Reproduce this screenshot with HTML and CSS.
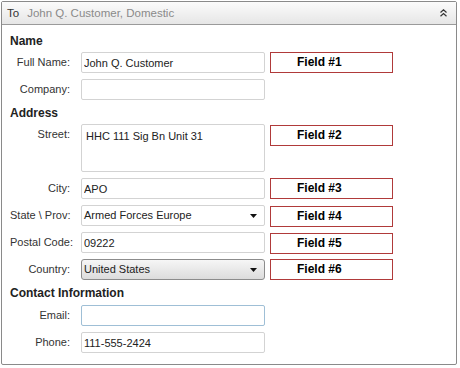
FILE: index.html
```html
<!DOCTYPE html>
<html lang="en">
<head>
  <meta charset="UTF-8" />
  <title>Ship To</title>
  <link rel="stylesheet" href="styles.css">
</head>
<body>

  <div class="panel">
    <div class="panel-head">
      <span class="head-to">To</span>
      <span class="head-summary">John Q. Customer, Domestic</span>
      <svg class="collapse" width="7" height="8" viewBox="0 0 7 8">
        <path d="M0.5 3.5 L3.5 0.8 L6.5 3.5 M0.5 7.2 L3.5 4.5 L6.5 7.2" fill="none" stroke="#333" stroke-width="1.2"/>
      </svg>
    </div>

    <div class="panel-body">
      <h3 class="section">Name</h3>
      <div class="rows">
        <div class="row">
          <label>Full Name:</label>
          <input class="field" type="text" value="John Q. Customer" />
          <div class="tag">Field #1</div>
        </div>
        <div class="row">
          <label>Company:</label>
          <input class="field" type="text" value="" />
        </div>
      </div>

      <h3 class="section">Address</h3>
      <div class="rows">
        <div class="row">
          <label>Street:</label>
          <div class="field area">HHC 111 Sig Bn Unit 31</div>
          <div class="tag tag-low">Field #2</div>
        </div>
        <div class="row">
          <label>City:</label>
          <input class="field" type="text" value="APO" />
          <div class="tag">Field #3</div>
        </div>
        <div class="row">
          <label>State \ Prov:</label>
          <div class="field select">
            <span>Armed Forces Europe</span>
            <svg width="7" height="4" viewBox="0 0 7 4"><path d="M0 0 H7 L3.5 4 Z" fill="#111"/></svg>
          </div>
          <div class="tag tag-low">Field #4</div>
        </div>
        <div class="row">
          <label>Postal Code:</label>
          <input class="field" type="text" value="09222" />
          <div class="tag tag-low">Field #5</div>
        </div>
        <div class="row">
          <label>Country:</label>
          <div class="field select select-btn">
            <span>United States</span>
            <svg width="7" height="4" viewBox="0 0 7 4"><path d="M0 0 H7 L3.5 4 Z" fill="#111"/></svg>
          </div>
          <div class="tag">Field #6</div>
        </div>
      </div>

      <h3 class="section section-last">Contact Information</h3>
      <div class="rows">
        <div class="row">
          <label>Email:</label>
          <input class="field field-focus" type="text" value="" />
        </div>
        <div class="row">
          <label>Phone:</label>
          <input class="field" type="text" value="111-555-2424" />
        </div>
      </div>
    </div>
  </div>

</body>
</html>
```

FILE: styles.css
```css
* {
  box-sizing: border-box;
}

body {
  margin: 0;
  background: #fff;
  font-family: "Liberation Sans", Arial, sans-serif;
  font-size: 11px;
  color: #333;
}

.panel {
  margin: 1px 0 0 1px;
  width: 456px;
  height: 364px;
  border: 1px solid #8a8a8a;
  border-radius: 2px;
  background: #fff;
}

.panel-head {
  display: flex;
  align-items: center;
  height: 23px;
  padding: 0 9px 0 5px;
  border-bottom: 1px solid #9a9a9a;
  background: linear-gradient(#fbfbfb, #e6e6e6);
  line-height: 22px;
  font-size: 11.5px;
}

.head-to {
  color: #333;
  margin-right: 8px;
}

.head-summary {
  flex: 1;
  color: #8a8a8a;
}

.panel-body {
  padding: 3px 0 0 8px;
}

.section {
  margin: 0;
  padding: 6px 0 3px;
  line-height: 15px;
  font-size: 12px;
  font-weight: bold;
  color: #222;
}

.section-last {
  padding-bottom: 4px;
}

.rows {
  display: flex;
  flex-direction: column;
  gap: 6px;
}

.row {
  display: flex;
  align-items: flex-start;
}

.row label {
  width: 60px;
  margin-right: 11px;
  text-align: right;
  white-space: nowrap;
  line-height: 21px;
  color: #333;
}

.field {
  width: 184px;
  height: 21px;
  margin: 0;
  padding: 0 2px;
  border: 1px solid #d3d3d3;
  border-radius: 2px;
  background: #fff;
  font-family: inherit;
  font-size: 11px;
  color: #222;
  line-height: 19px;
  outline: none;
}

.field-focus {
  border-color: #9fbfd6;
}

.area {
  height: 48px;
  padding: 2px 4px;
}

.select {
  display: flex;
  align-items: center;
  justify-content: space-between;
  padding: 0 7px 0 2px;
}

.select svg {
  margin-top: 1px;
}

.select-btn {
  border-color: #8c8c8c;
  border-radius: 3px;
  background: linear-gradient(#f6f6f6, #dcdcdc);
}

.tag {
  width: 123px;
  height: 21px;
  margin-left: 5px;
  padding-left: 26px;
  border: 1px solid #b03a3a;
  line-height: 19px;
  font-size: 12px;
  font-weight: bold;
  color: #000;
}

/* sits a pixel lower without growing the row */
.tag-low {
  margin-top: 1px;
  margin-bottom: -1px;
}
```
